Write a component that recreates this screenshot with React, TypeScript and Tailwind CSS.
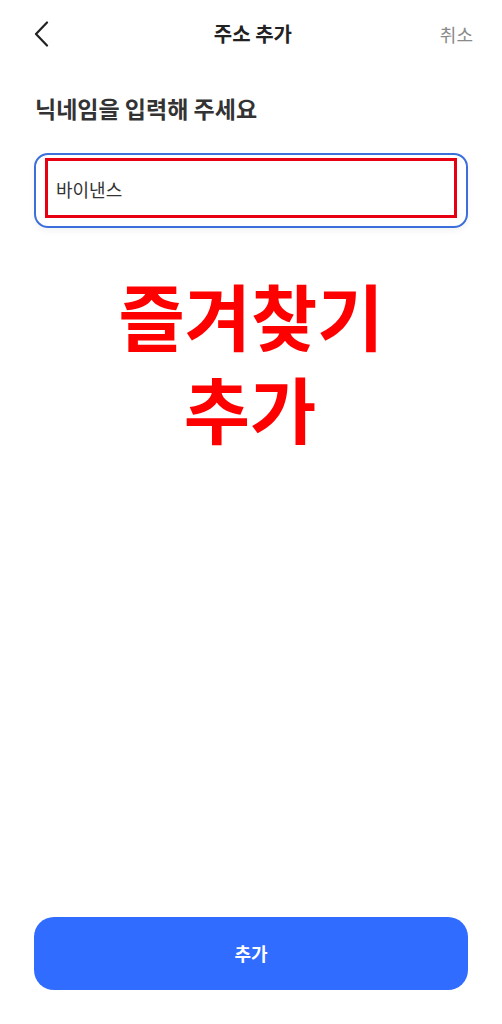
import React from 'react';

const font = { fontFamily: '"Noto Sans CJK KR", "Noto Sans", sans-serif' };

export default function App() {
  return (
    <div style={font} className="w-[502px] h-[1024px] bg-white flex flex-col">
      {/* header */}
      <div className="h-[68px] pl-[33px] pr-[29px] flex items-center justify-between">
        <svg width="16" height="26" viewBox="0 0 16 26" fill="none" className="ml-[1px]">
          <path d="M13 1.5L2 13l11 11.5" stroke="#222" strokeWidth="2.2" strokeLinecap="round" strokeLinejoin="round" />
        </svg>
        <div className="text-[20px] font-bold text-[#222] ml-[16px]">주소 추가</div>
        <div className="text-[18px] text-[#8a8a8a]">취소</div>
      </div>

      <div className="px-[35px] pt-[25px] text-[23px] font-bold text-[#333] leading-[30px]">닉네임을 입력해 주세요</div>

      <div className="mx-[34px] mt-[30px] h-[75px] rounded-[14px] border-2 border-[#3c6fdc] flex items-center px-[9px] shadow-[0_3px_6px_rgba(0,0,0,0.05)]">
        <div className="flex-1 h-[60px] -mt-[6px] border-[3px] border-[#e60012] flex items-center px-[8px] pt-[4px]">
          <span className="text-[18px] text-[#333]">바이낸스</span>
        </div>
      </div>

      <div className="mt-[39px] flex flex-col items-center text-[#ff0000] text-[72px] font-bold leading-[93px]">
        <div>즐겨찾기</div>
        <div className="-ml-[2px]">추가</div>
      </div>

      <div className="flex-1" />

      <div className="px-[34px] pb-[34px]">
        <button className="w-full h-[73px] rounded-[20px] bg-[#306cff] text-white text-[18px] font-semibold">추가</button>
      </div>
    </div>
  );
}
